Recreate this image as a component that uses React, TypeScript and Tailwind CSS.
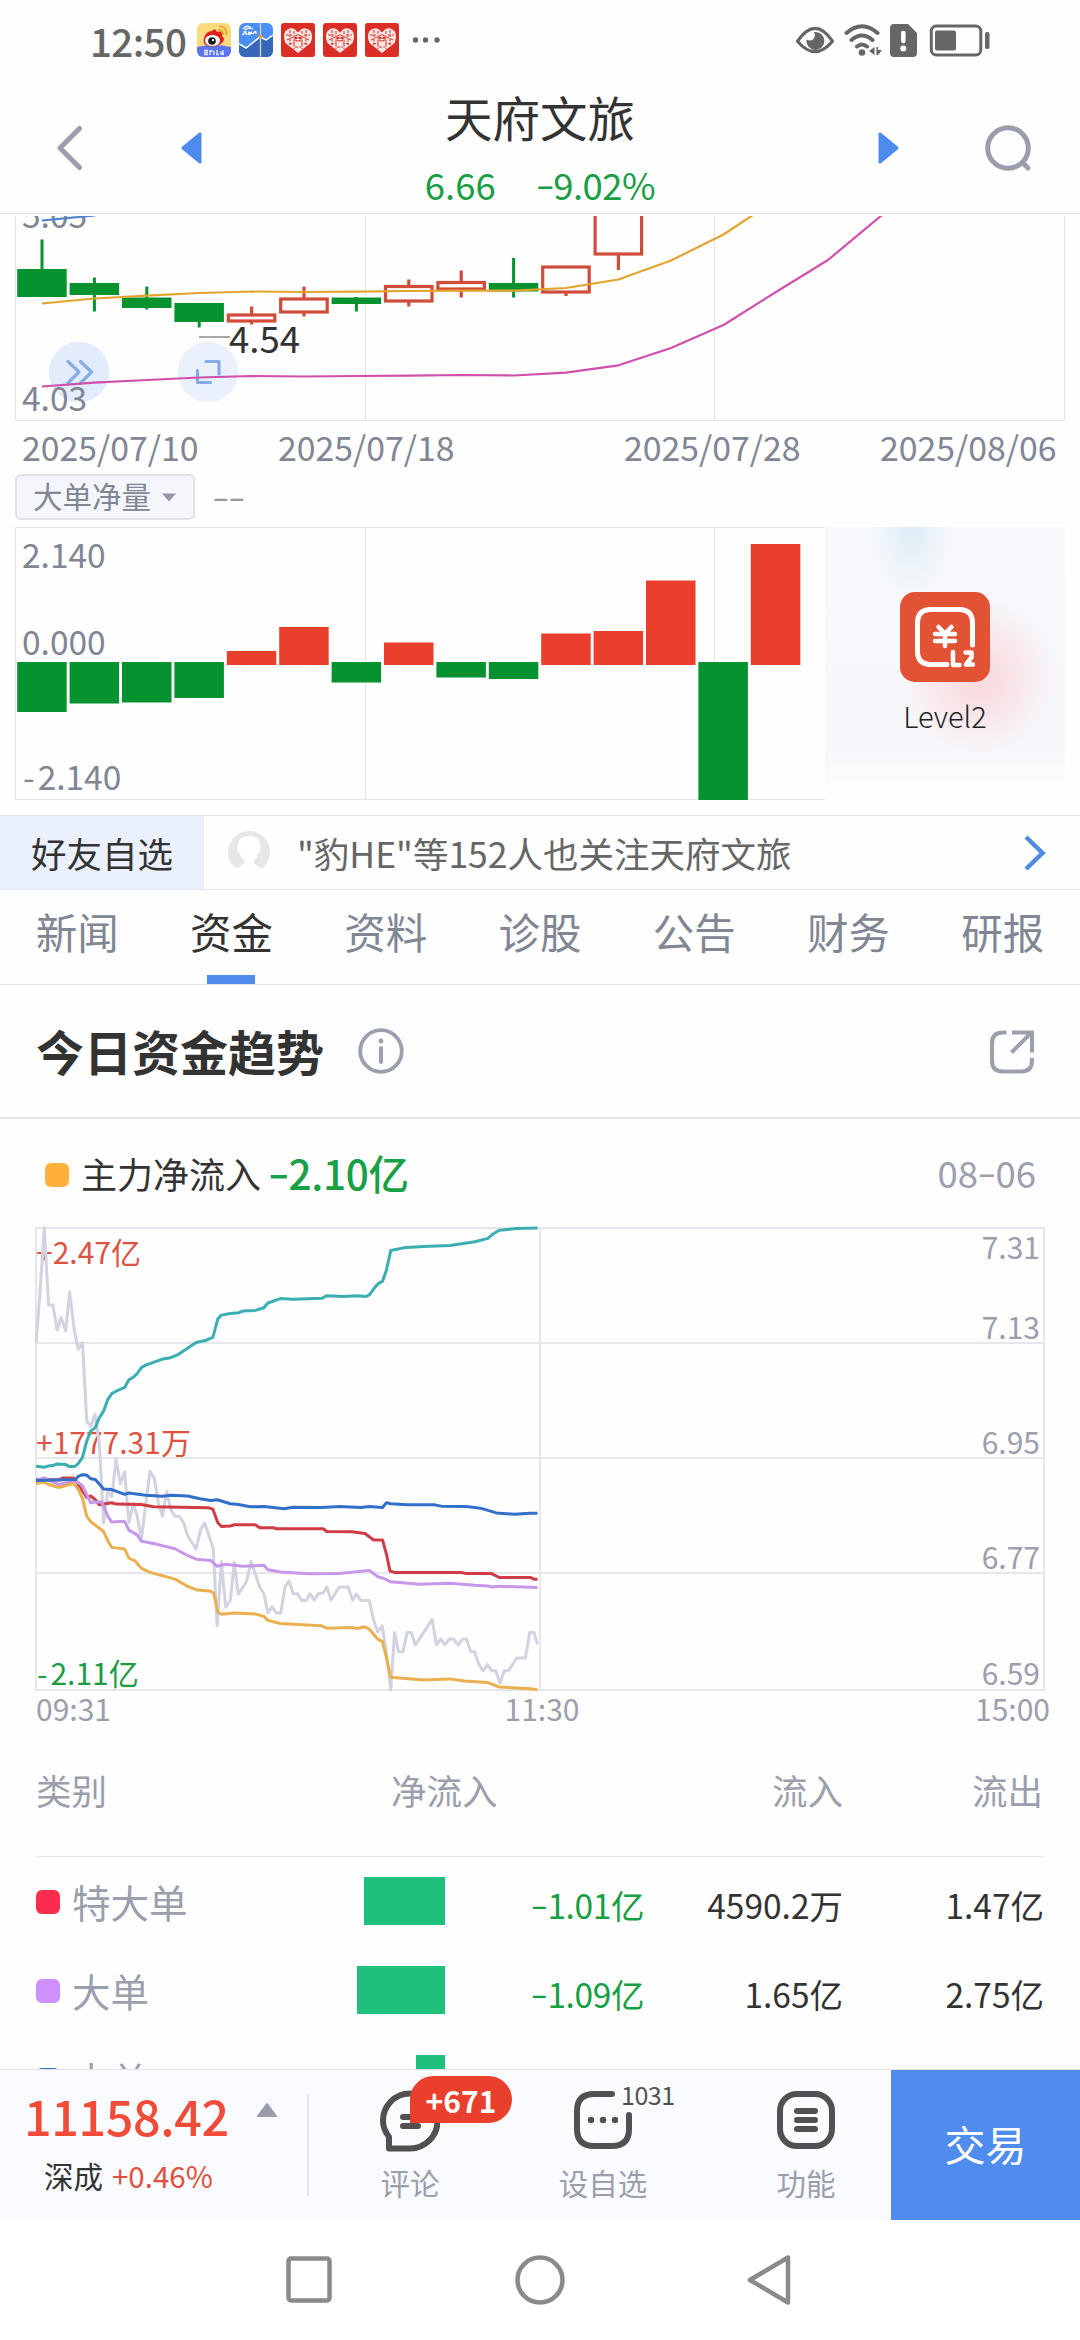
import type { ReactNode } from 'react';

const FONT = "font-['Noto_Sans_CJK_SC','Noto_Sans',sans-serif]";

type Candle = { up: boolean; open: number; close: number; high: number; low: number };

// body top/bottom and wick top/bottom, in chart pixels
const candles: Candle[] = [
    { up: false, open: 269, close: 297, high: 239.5, low: 297 },
    { up: false, open: 283, close: 295, high: 277.5, low: 311.5 },
    { up: false, open: 297.5, close: 308, high: 286.5, low: 309.5 },
    { up: false, open: 303, close: 322, high: 303, low: 327.5 },
    { up: true, open: 314, close: 322, high: 306.5, low: 324.5 },
    { up: true, open: 298, close: 313, high: 286.5, low: 316.5 },
    { up: false, open: 297.5, close: 304, high: 297, low: 311.5 },
    { up: true, open: 285.5, close: 302, high: 279.5, low: 306.5 },
    { up: true, open: 281.5, close: 290, high: 270.5, low: 297.5 },
    { up: false, open: 283, close: 291.5, high: 258, low: 297.5 },
    { up: true, open: 266, close: 293, high: 266, low: 296 },
    { up: true, open: 190, close: 255, high: 190, low: 270 },
];

// end of each volume bar; above the zero line is red, below is green
const netBars = [712, 703.5, 702.5, 698, 651, 627, 682.5, 642.5, 677.5, 679, 633.5, 631, 580.5, 800, 544];

const centerX = (i: number) => 42 + i * 52.4;

const trend = {
    price: '101,393 112,245 124,52 136,281 148,281 160,355 171,318 184,357 195,243 208,355 219,412 231,393 243,625 254,640 266,605 278,690 290,925 302,830 313,848 325,737 337,810 349,775 361,925 373,868 384,905 396,975 408,870 420,773 432,793 444,870 455,905 467,832 478,885 490,906 502,906 514,925 525,963 549,1003 562,945 573,926 585,963 597,1002 608,1230 620,1040 632,1175 645,1155 656,1042 667,1136 690,1100 703,1040 727,1115 739,1135 750,1192 762,1174 774,1192 786,1192 798,1115 809,1098 821,1135 833,1135 845,1155 857,1155 868,1135 880,1154 891,1135 905,1133 915,1115 927,1154 950,1115 975,1115 987,1154 998,1136 1010,1155 1034,1155 1046,1213 1058,1248 1070,1230 1082,1310 1094,1419 1105,1250 1116,1307 1128,1307 1140,1250 1152,1250 1163,1287 1210,1211 1222,1286 1234,1269 1246,1286 1258,1269 1270,1269 1283,1287 1295,1269 1306,1269 1318,1307 1329,1307 1341,1345 1353,1363 1365,1345 1377,1363 1388,1363 1400,1400 1412,1363 1424,1363 1447,1325 1471,1325 1483,1250 1495,1250 1505,1285',
    small: '101,758 124,761 136,757 148,756 160,751 184,753 195,759 209,759 219,750 231,732 243,683 254,654 267,643 278,615 290,595 302,560 313,543 325,536 349,525 361,502 373,495 384,484 396,466 408,459 455,441 478,437 500,427 525,409 549,392 575,386 596,377 610,322 620,311 645,306 668,304 680,299 715,297 739,289 750,275 785,262 820,264 902,261 914,254 960,256 1000,254 1025,256 1034,251 1048,231 1060,217 1071,211 1082,178 1094,120 1130,112 1185,108 1260,105 1330,94 1366,84 1380,71 1398,60 1445,55 1505,53',
    huge: '101,798 165,798 175,793 207,793 219,812 243,850 254,846 267,857 278,872 313,866 325,870 396,871 430,878 584,881 596,885 610,925 620,936 645,935 655,931 715,931 727,940 765,940 775,943 905,943 915,951 985,952 1022,957 1046,976 1071,976 1082,1018 1092,1068 1104,1072 1290,1072 1305,1075 1375,1075 1398,1087 1485,1087 1495,1092 1505,1092',
    big: '101,800 124,792 136,799 165,812 195,806 219,806 231,816 254,866 267,864 285,864 302,906 313,923 349,921 361,947 384,961 396,980 440,989 490,1002 525,1022 549,1033 590,1037 608,1054 632,1048 680,1054 739,1051 750,1064 785,1071 865,1076 950,1075 1034,1066 1058,1085 1075,1090 1094,1100 1175,1107 1260,1104 1330,1110 1366,1112 1378,1115 1398,1113 1505,1117',
    main: '101,810 120,804 136,812 165,821 195,812 207,809 219,826 231,854 243,906 254,922 290,951 302,979 313,998 349,1003 361,1030 378,1038 396,1060 420,1072 490,1092 525,1113 549,1123 590,1128 598,1133 610,1190 620,1196 655,1192 715,1195 739,1202 750,1214 785,1223 900,1230 915,1237 985,1235 1000,1238 1022,1233 1034,1240 1058,1270 1071,1277 1082,1325 1094,1382 1185,1390 1260,1387 1300,1393 1366,1398 1398,1411 1485,1416 1505,1419',
    middle: '101,800 212,797 219,788 231,783 243,784 254,795 267,797 290,825 313,827 349,841 361,837 408,844 455,847 478,844 525,846 560,854 590,859 608,857 645,869 668,871 700,878 740,877 795,884 820,879 900,880 950,877 1010,880 1034,877 1071,880 1082,866 1094,869 1140,872 1215,872 1235,876 1305,877 1345,882 1390,896 1440,900 1485,897 1505,897',
};

// the hyphen of the number face is short and low, so it is stretched and lifted
function Dash() {
    return <span className="inline-block w-[0.48em] text-center scale-x-150 -translate-y-[0.06em]">-</span>;
}

function Num({ value }: { value: string }) {
    const parts = value.split('-');
    return (
        <>
            {parts.map((part, i) => (
                <span key={i}>
                    {i > 0 && <Dash />}
                    {part}
                </span>
            ))}
        </>
    );
}

function StatusBar() {
    return (
        <div className="h-20 flex items-center justify-between pl-[90px] pr-[89px] text-[#666]">
            <div className="flex items-center">
                <span className="text-[38.500px] leading-none font-medium w-[107px] tracking-[-0.6px]">12:50</span>
                <div className="flex gap-2">
                    <svg width="34" height="34" viewBox="0 0 34 34">
                        <defs>
                            <clipPath id="appTile"><rect width="34" height="34" rx="6" /></clipPath>
                        </defs>
                        <g clipPath="url(#appTile)">
                            <rect width="34" height="34" fill="#fbdb7e" />
                            <path d="M0 24Q17 20 34 24V34H0Z" fill="#5b74f0" />
                            <path d="M7 15Q9 8 15 8Q18 4 20 9Q26 7 25 13Q29 16 25 20Q19 25 11 23Q5 21 7 15Z" fill="#e0211b" />
                            <ellipse cx="15.500" cy="17.500" rx="7.500" ry="5.500" fill="#fff" />
                            <circle cx="15" cy="18" r="3.800" fill="#111" />
                            <circle cx="16" cy="17" r="1.200" fill="#fff" />
                            <path d="M21 7Q26 6 26 12M22 3.500Q30 3 29.500 12" fill="none" stroke="#eda32c" strokeWidth="1.800" />
                            <path d="M7 29.500H11M7 27.500H11M7 31.500H11M13 27V32M13 28H16M17 28V32M20 27V31.500H22M24 28V31H27M26 27V32" stroke="#e8ecff" strokeWidth="1.300" fill="none" />
                        </g>
                    </svg>
                    <svg width="34" height="34" viewBox="0 0 34 34">
                        <g clipPath="url(#appTile)">
                            <rect width="34" height="34" fill="#4a8ef6" />
                            <path d="M0 21L7 25L21 14L27 17L34 12V34H0Z" fill="#3767b8" />
                            <path d="M0 21L7 25L21 14L27 17L34 12" fill="none" stroke="#fff" strokeWidth="1.500" />
                            <path d="M21.500 0V34" stroke="#d8d6b0" strokeWidth="1.300" />
                            <circle cx="21.500" cy="13.500" r="2" fill="#e8a23a" />
                            <path d="M3 12Q6 11 5 8M7 12V8M9 12Q10 6 11 12Q12 7 13 11M14 11Q17 6 17 11M4 6Q8 1 12 5M6 7Q9 4 14 6" fill="none" stroke="#fff" strokeWidth="1.300" />
                        </g>
                    </svg>
                    {[0, 1, 2].map((i) => (
                        <svg key={i} width="34" height="34" viewBox="0 0 34 34">
                            <rect width="34" height="34" rx="3" fill="#d92d26" />
                            <path d="M17 30L4.500 20Q1.500 13 4.500 8Q9 3.500 14 6.500L17 9.500L20 6.500Q25 3.500 29.500 8Q32.500 13 29.500 20Z" fill="#fbe6e3" />
                            <path d="M9 7V22M13 8V26M21 8V26M25 7V22M5 12H11M23 12H29M6 17L12 14M28 17L22 14M8 21L14 20M26 21L20 20M14 24H20" stroke="#d92d26" strokeWidth="1" strokeDasharray="3 1.200" />
                            <circle cx="17" cy="15" r="3.500" fill="#d92d26" />
                            <path d="M14.500 13.500H19.500M14.500 16.500H19.500M17 12V18" stroke="#fbe6e3" strokeWidth="1.100" />
                        </svg>
                    ))}
                </div>
                <svg className="ml-3" width="30" height="8" viewBox="0 0 30 8" fill="#666">
                    <circle cx="4.500" cy="4" r="2.700" /><circle cx="14.500" cy="4" r="2.700" /><circle cx="26" cy="4" r="2.700" />
                </svg>
            </div>
            <svg width="196" height="36" viewBox="795 22 196 36" fill="none" stroke="#666">
                <path d="M797.500 41.200Q815 15.500 832.500 41.200Q815 62 797.500 41.200Z" strokeWidth="3.200" strokeLinejoin="round" />
                <path d="M814 32A9 9 0 1 1 806.500 39.500Q812 42 814.500 37.500Q815.500 34.500 814 32Z" fill="#666" stroke="none" />
                <g strokeWidth="4" strokeLinecap="round">
                    <path d="M846.500 33Q862 19.500 877.500 33M851.500 40Q862 31 872.500 40M857 46.500Q862 42.500 867 46.500" />
                </g>
                <circle cx="862" cy="52.500" r="3.300" fill="#666" stroke="none" />
                <path d="M869 51L874.500 47V55ZM876.500 47H878V55H876.500ZM878 50H882L878 55Z" fill="#666" stroke="none" />
                <path d="M894 24H908L917 33V53Q917 57 913 57H894Q890 57 890 53V28Q890 24 894 24Z" fill="#666" stroke="none" />
                <path d="M903.300 33V41" stroke="#fff" strokeWidth="4.500" strokeLinecap="round" />
                <circle cx="903.300" cy="48.500" r="3" fill="#fff" stroke="none" />
                <rect x="931.300" y="26" width="49.500" height="29" rx="5" strokeWidth="3" />
                <rect x="935" y="30.500" width="21" height="20" rx="2" fill="#666" stroke="none" />
                <rect x="985" y="32" width="4.500" height="17" rx="2" fill="#666" stroke="none" />
            </svg>
        </div>
    );
}

function Header() {
    return (
        <header className="h-[134px] mb-0.5 border-b border-[#e4e4e6] flex justify-between pl-[54px] pr-[46px]">
            <div className="flex items-center pt-[3px]">
                <svg width="32" height="48" viewBox="0 0 32 48" fill="none" stroke="#9c9dac" strokeWidth="5" strokeLinecap="round" strokeLinejoin="round">
                    <path d="M25.500 4.500L6 24L25.500 43.500" />
                </svg>
                <svg className="ml-[93px]" width="26" height="36" viewBox="0 0 26 36">
                    <path d="M4 18L21 4V32Z" fill="#4f8bed" stroke="#4f8bed" strokeWidth="3" strokeLinejoin="round" />
                </svg>
            </div>
            <div className="flex flex-col items-center w-[300px]">
                <h1 className="text-[47.500px] leading-[56px] mt-[9px] text-[#333]">天府文旅</h1>
                <div className="flex gap-[40px] text-[36.500px] leading-[48px] mt-[16px] text-[#189e43]">
                    <span>6.66</span>
                    <span className="tracking-[-0.5px]"><Num value="-9.02%" /></span>
                </div>
            </div>
            <div className="flex items-center pt-[3px]">
                <svg width="26" height="36" viewBox="0 0 26 36">
                    <path d="M22 18L5 4V32Z" fill="#4f8bed" stroke="#4f8bed" strokeWidth="3" strokeLinejoin="round" />
                </svg>
                <svg className="ml-[83px]" width="50" height="50" viewBox="0 0 50 50" fill="none" stroke="#9c9dac" strokeWidth="5" strokeLinecap="round">
                    <circle cx="24" cy="25" r="20.300" />
                    <path d="M40 41L44 45" />
                </svg>
            </div>
        </header>
    );
}

function KLine() {
    return (
        <svg className="block" width="1080" height="206" viewBox="0 216 1080 206" fontSize="33.500">
            <path d="M15.500 200V420.500H1064.500V200M365.500 200V420M714.500 200V420" fill="none" stroke="#e4e4e7" />
            <circle cx="79" cy="372" r="30.300" fill="#e2ecfb" />
            <circle cx="208" cy="372" r="30.300" fill="#eaf1fc" />
            <g fill="none" stroke="#85ace5" strokeWidth="3.200" strokeLinecap="round" strokeLinejoin="round">
                <path d="M68 361.500L79 372L68 383M80.500 361.500L91.500 372L80.500 383" />
                <path d="M206 361.500H219V374M197.500 370.500V382.500H210.500" />
            </g>
            <text x="22" y="228" fill="#808694">5.05</text>
            {candles.map((c, i) => {
                const x = centerX(i);
                if (!c.up) {
                    return (
                        <g key={i} fill="#05922f">
                            <rect x={x - 24.800} y={c.open} width="49.500" height={c.close - c.open} />
                            <rect x={x - 1.500} y={c.high} width="3" height={c.low - c.high} />
                        </g>
                    );
                }
                return (
                    <g key={i} fill="none" stroke="#d04b38" strokeWidth="3.200">
                        <rect x={x - 23.300} y={c.open + 1} width="46.500" height={c.close - c.open - 2} />
                        <path d={`M${x} ${c.high}V${c.open}M${x} ${c.close}V${c.low}`} />
                    </g>
                );
            })}
            <text x="22" y="411" fill="#808694">4.03</text>
            <path d="M199 337H230" stroke="#999" strokeWidth="1.700" />
            <text x="229" y="352.500" fontSize="36.500" fill="#333">4.54</text>
            <g fill="none" strokeWidth="2.200" strokeLinejoin="round">
                <path d="M42 220.500L95 215.500" stroke="#4c80d2" />
                <polyline points="42,303.5 94.4,298.5 147,295.7 199,293 252,291.5 304,292 357,291.7 409,291 461,290.7 514,290.7 566,288 618.5,279.5 671,260.5 723.5,234.5 753,215" stroke="#e3a42e" />
                <polyline points="42,386.5 94,382.7 147,380 199,377.5 252,376 304,376.5 357,376 409,375.7 461,375 514,375.5 566,372.7 618.5,365.3 671,348 723.5,325 776,292 828,260 882,215" stroke="#d04fac" />
            </g>
        </svg>
    );
}

function DateAxis() {
    return (
        <div className="h-[52px] flex items-center pl-[22px] pb-[3px] text-[33.800px] leading-none text-[#808694]">
            <span className="w-[256px]">2025/07/10</span>
            <span className="w-[346px]">2025/07/18</span>
            <span className="w-[256px]">2025/07/28</span>
            <span>2025/08/06</span>
        </div>
    );
}

function NetVolume() {
    return (
        <>
            <div className="flex h-[46px] pl-[15px] items-center">
                <div className="h-[46px] w-[180px] flex items-center justify-center gap-[10px] pb-[2px] rounded-md border-2 border-[#dfe1ec] bg-[#f5f6fb] text-[29.500px] leading-none text-[#808694]">
                    <span>大单净量</span>
                    <svg className="mt-[2px]" width="16" height="9" viewBox="0 0 16 9"><path d="M1 0.500H15L8 8.500Z" fill="#9698a8" /></svg>
                </div>
                <span className="ml-[18px] text-[33px] leading-none text-[#999]"><Num value="--" /></span>
            </div>
            <div className="flex h-[276px] mt-1.5">
                <svg className="block" width="825" height="276" viewBox="0 526 825 276" fontSize="33.500">
                    <path d="M826 527.500H15.500V799.500H826M365.500 528V799M714.500 528V799" fill="none" stroke="#e4e4e7" />
                    <g fill="#808694">
                        <text x="22" y="568">2.140</text>
                        <text x="22" y="655">0.000</text>
                        <text x="23" y="789.500">-<tspan dx="3">2.140</tspan></text>
                    </g>
                    {netBars.map((end, i) =>
                        end > 663 ? (
                            <rect key={i} x={centerX(i) - 24.800} y="662" width="49.500" height={end - 662} fill="#05922f" />
                        ) : (
                            <rect key={i} x={centerX(i) - 24.800} y={end} width="49.500" height={665 - end} fill="#ea3f2c" />
                        ),
                    )}
                </svg>
                <div className="mt-px h-[273px] w-[240px] flex flex-col items-center pt-[65px] bg-[linear-gradient(#fefefe00_82%,#fefefe_97%),radial-gradient(circle_at_64%_55%,#f9d9dd_0%,#f9e2e6_14%,#f9d9dd00_36%),radial-gradient(ellipse_at_36%_0%,#deecf5_0%,#dcebf500_18%),linear-gradient(#f6f8fb,#f6f7fb)]">
                    <svg width="90" height="90" viewBox="0 0 90 90" fill="none" stroke="#fff" strokeLinecap="round">
                        <rect width="90" height="90" rx="15" fill="#e25336" stroke="none" />
                        <path d="M47 72.500H31Q17.500 72.500 17.500 59V31Q17.500 17.500 31 17.500H59Q72.500 17.500 72.500 31V53" strokeWidth="5" />
                        <path d="M38.500 35L45 41.500L51.500 35M35 42H55M35 49H55M45 42V54" strokeWidth="4.500" />
                        <path d="M53 60V73H59.500M65.500 60.500H71.500V65.500L66 72.500H73" strokeWidth="4.500" strokeLinejoin="round" />
                    </svg>
                    <span className="mt-[15px] text-[29px] leading-[36px] font-light text-[#222]">Level2</span>
                </div>
            </div>
        </>
    );
}

function FriendsRow() {
    return (
        <div className="mt-[13px] h-[75px] flex items-center border-y border-[#e4e5e9]">
            <div className="h-full w-[204px] flex items-center justify-center bg-[#eaf0fc] text-[35.500px] leading-none text-[#333]">好友自选</div>
            <svg className="ml-6" width="42" height="44" viewBox="0 0 42 44">
                <circle cx="21" cy="21" r="21" fill="#e7e7e9" />
                <path d="M10 14Q10 5 21 5Q32 5 32 14Q34 20 30 23Q29 27 25.500 30Q25 34 36 38L21 44L6 38Q17 34 16.500 30Q13 27 12 23Q8 20 10 14Z" fill="#fff" />
            </svg>
            <span className="ml-[27px] text-[35.500px] leading-none text-[#666]">"豹HE"等152人也关注天府文旅</span>
            <svg className="ml-auto mr-[33px]" width="24" height="40" viewBox="0 0 24 40" fill="none" stroke="#4f8be0" strokeWidth="4.500">
                <path d="M3 4L19.500 20L3 36" />
            </svg>
        </div>
    );
}

const tabs = ['新闻', '资金', '资料', '诊股', '公告', '财务', '研报'];

function Tabs() {
    return (
        <nav className="h-[95px] grid grid-cols-7 border-b border-[#e4e5e9]">
            {tabs.map((tab) => (
                <div key={tab} className="flex flex-col items-center justify-between">
                    <span className={tab === '资金' ? 'pt-[13px] text-[41.500px] leading-[56px] text-[#333]' : 'pt-[13px] text-[41.500px] leading-[56px] text-[#808694]'}>
                        {tab}
                    </span>
                    {tab === '资金' && <div className="h-[9px] w-12 bg-[#518cec]" />}
                </div>
            ))}
        </nav>
    );
}

function FundTrend() {
    const gridY = [1343, 1458, 1573];
    const prices: [string, number][] = [['7.31', 1259], ['7.13', 1339], ['6.95', 1454], ['6.77', 1569], ['6.59', 1685]];
    return (
        <section>
            <div className="h-[134px] flex items-center px-9 border-b-2 border-[#e3e4ea]">
                <h2 className="-mt-[3px] text-[48px] leading-none font-bold text-[#333]">今日资金趋势</h2>
                <svg className="ml-[34px]" width="46" height="46" viewBox="0 0 46 46" fill="none" stroke="#9b9fae">
                    <circle cx="23" cy="23" r="20.800" strokeWidth="3.800" />
                    <path d="M23 20V34" strokeWidth="4" strokeLinecap="round" />
                    <circle cx="23" cy="13" r="2.400" fill="#9b9fae" stroke="none" />
                </svg>
                <svg className="ml-auto mr-[9px] mt-[1px]" width="46" height="46" viewBox="0 0 46 46" fill="none" stroke="#9b9fae" strokeWidth="4">
                    <path d="M17.500 3.500H14Q3 3.500 3 14V32Q3 42.500 14 42.500H32Q43 42.500 43 32V29" />
                    <path d="M23 3.500H43V23.500M42 4L22.500 23.500" />
                </svg>
            </div>
            <div className="h-[106px] flex items-center pt-[2px] pl-[45px] pr-[44px] leading-none">
                <div className="mt-[4px] size-6 rounded-md bg-[#ffb13b]" />
                <span className="ml-3 text-[36px] text-[#333]">主力净流入</span>
                <span className="ml-2 text-[40.500px] font-medium text-[#17a045] tracking-[-0.3px]"><Num value="-2.10亿" /></span>
                <span className="ml-auto text-[36.500px] text-[#9b9fae]"><Num value="08-06" /></span>
            </div>
            <svg className="block" width="1080" height="504" viewBox="0 1225 1080 504" fontSize="30">
                <g fill="none" stroke="#e6e6ec" strokeWidth="2">
                    <rect x="36" y="1228" width="1008" height="462" />
                    <path d="M540 1228V1690" />
                    {gridY.map((y) => (
                        <path key={y} d={`M36 ${y}H1044`} />
                    ))}
                </g>
                <text x="36" y="1264" fill="#dd5342">+2.47亿</text>
                <text x="36" y="1454" fill="#dd5342">+1777.31万</text>
                <text x="37" y="1685" fill="#1a9c45">-<tspan dx="3">2.11亿</tspan></text>
                <g fill="#9b9eac">
                    {prices.map(([label, y]) => (
                        <text key={label} x="1040" y={y} textAnchor="end">{label}</text>
                    ))}
                    <text x="36" y="1720.500">09:31</text>
                    <text x="542" y="1720.500" textAnchor="middle">11:30</text>
                    <text x="1050" y="1720.500" textAnchor="end">15:00</text>
                </g>
                <g transform="translate(0 1210) scale(0.35714 0.33806)" fill="none" strokeWidth="3" strokeLinejoin="round">
                    <polyline points={trend.price} stroke="#d2d3e0" vectorEffect="non-scaling-stroke" />
                    <polyline points={trend.small} stroke="#3aaeb0" vectorEffect="non-scaling-stroke" />
                    <polyline points={trend.huge} stroke="#cf3c44" vectorEffect="non-scaling-stroke" />
                    <polyline points={trend.big} stroke="#c797ea" vectorEffect="non-scaling-stroke" />
                    <polyline points={trend.main} stroke="#eab050" vectorEffect="non-scaling-stroke" />
                    <polyline points={trend.middle} stroke="#316fcb" vectorEffect="non-scaling-stroke" />
                </g>
            </svg>
        </section>
    );
}

const rows = [
    { name: '特大单', dot: 'bg-[#fb2c4e]', bar: 'w-[81px]', net: '-1.01亿', inflow: '4590.2万', outflow: '1.47亿' },
    { name: '大单', dot: 'bg-[#d08fff]', bar: 'w-[88px]', net: '-1.09亿', inflow: '1.65亿', outflow: '2.75亿' },
    { name: '中单', dot: 'bg-[#2f72c4]', bar: 'w-[29px]', net: '-3520万', inflow: '3.05亿', outflow: '3.40亿' },
];

function FlowTable() {
    return (
        <section className="h-[340px] overflow-hidden px-9">
            <div className="h-[128px] flex items-center pb-[5px] border-b border-[#e6e6ea] text-[35.500px] leading-none text-[#9b9eac]">
                <span className="w-[355px]">类别</span>
                <span className="w-[240px]">净流入</span>
                <span className="w-[212px] text-right">流入</span>
                <span className="w-[200px] text-right">流出</span>
            </div>
            {rows.map((row) => (
                <div key={row.name} className="h-[89px] flex items-center text-[33.500px] leading-none text-[#333]">
                    <div className={`size-6 rounded-md ${row.dot}`} />
                    <span className="ml-3 w-[149px] text-[38.500px] text-[#9b9eac]">{row.name}</span>
                    <div className="w-[224px] flex justify-end">
                        <div className={`h-12 -mt-px ${row.bar} bg-[#1fbf7c]`} />
                    </div>
                    <span className="w-[199px] pt-[7px] text-right text-[#189e43] tracking-[-0.4px]"><Num value={row.net} /></span>
                    <span className="w-[199px] pt-[7px] text-right">{row.inflow}</span>
                    <span className="w-[201px] pt-[7px] text-right">{row.outflow}</span>
                </div>
            ))}
        </section>
    );
}

function Action({ label, className, children }: { label: string; className: string; children: ReactNode }) {
    return (
        <div className={`flex flex-col items-center pt-[18px] ${className}`}>
            <div className="relative h-[64px]">{children}</div>
            <span className="mt-[10px] text-[29.500px] leading-[40px] text-[#9b9eac]">{label}</span>
        </div>
    );
}

function BottomBar() {
    return (
        <div className="h-[151px] flex border-t border-[#e3e4ea] bg-[#fafbff]">
            <div className="w-[307px] flex justify-between pl-[24px] pr-[29px]">
                <div className="flex flex-col items-center">
                    <span className="mt-[17px] text-[48.500px] leading-[56px] font-medium text-[#f04c39] tracking-[-0.4px]">11158.42</span>
                    <div className="mt-[14px] ml-1 flex gap-[9px] text-[29.500px] leading-[36px]">
                        <span className="text-[#333]">深成</span>
                        <span className="text-[#e1503e]">+0.46%</span>
                    </div>
                </div>
                <svg className="mt-[32px]" width="22" height="16" viewBox="0 0 22 16">
                    <path d="M11 2L20 14H2Z" fill="#9c9dac" stroke="#9c9dac" strokeWidth="2" strokeLinejoin="round" />
                </svg>
            </div>
            <div className="mt-6 h-[102px] w-[1.500px] bg-[#e3e4ec]" />
            <Action label="评论" className="ml-[26.500px] w-[150px]">
                <svg className="mt-[2px]" width="60" height="62" viewBox="0 0 60 62" fill="none" stroke="#515151" strokeWidth="6" strokeLinejoin="round" strokeLinecap="round">
                    <path d="M30 3.500A27 27 0 0 1 30 58.500H9V47Q3 39 3 31A27 27 0 0 1 30 3.500Z" />
                    <path d="M23 27H38M23 36H38" />
                </svg>
                <div className="absolute left-[30px] top-[-12px] h-[47px] w-[102px] flex items-center justify-center rounded-full rounded-bl-none bg-[#ea3f2c] text-[30px] leading-none font-bold text-white">
                    +671
                </div>
            </Action>
            <Action label="设自选" className="w-[236px]">
                <svg className="mt-[3px]" width="58" height="58" viewBox="0 0 58 58" fill="none" stroke="#515151" strokeWidth="6" strokeLinecap="round">
                    <path d="M38 3H20Q3 3 3 20V38Q3 55 20 55H38Q55 55 55 38V24" />
                    <g fill="#515151" stroke="none">
                        <circle cx="17" cy="29" r="3.200" /><circle cx="29" cy="29" r="3.200" /><circle cx="41" cy="29" r="3.200" />
                    </g>
                </svg>
                <span className="absolute left-[47px] top-[-8px] text-[25px] leading-[28px] text-[#515151] tracking-[-0.5px]">1031</span>
            </Action>
            <Action label="功能" className="w-[170px]">
                <svg className="mt-[3px]" width="58" height="58" viewBox="0 0 58 58" fill="none" stroke="#515151" strokeWidth="6" strokeLinecap="round">
                    <rect x="3" y="3" width="52" height="52" rx="17" />
                    <path d="M20 20H38M20 29H38M20 38H38" />
                </svg>
            </Action>
            <div className="flex-1 flex items-center justify-center pb-[3px] bg-[#508cee] text-[41px] leading-none text-white">交易</div>
        </div>
    );
}

function SystemNav() {
    return (
        <div className="h-[120px] flex items-center justify-center gap-[181px] bg-white">
            <svg width="50" height="50" viewBox="0 0 50 50" fill="none" stroke="#8a8a8a" strokeWidth="4.500">
                <rect x="4.500" y="3.500" width="41" height="42" rx="2.500" />
            </svg>
            <svg width="50" height="50" viewBox="0 0 50 50" fill="none" stroke="#8a8a8a" strokeWidth="4.500">
                <circle cx="25" cy="25" r="22.500" />
            </svg>
            <svg width="50" height="50" viewBox="0 0 50 50" fill="none" stroke="#8a8a8a" strokeWidth="4.500" strokeLinejoin="round">
                <path d="M4 25L42 2.500V47.500Z" />
            </svg>
        </div>
    );
}

export default function App() {
    return (
        <div className={`w-[1080px] h-[2340px] overflow-hidden bg-[#fefefe] ${FONT}`}>
            <StatusBar />
            <Header />
            <KLine />
            <DateAxis />
            <NetVolume />
            <FriendsRow />
            <Tabs />
            <FundTrend />
            <FlowTable />
            <BottomBar />
            <SystemNav />
        </div>
    );
}
